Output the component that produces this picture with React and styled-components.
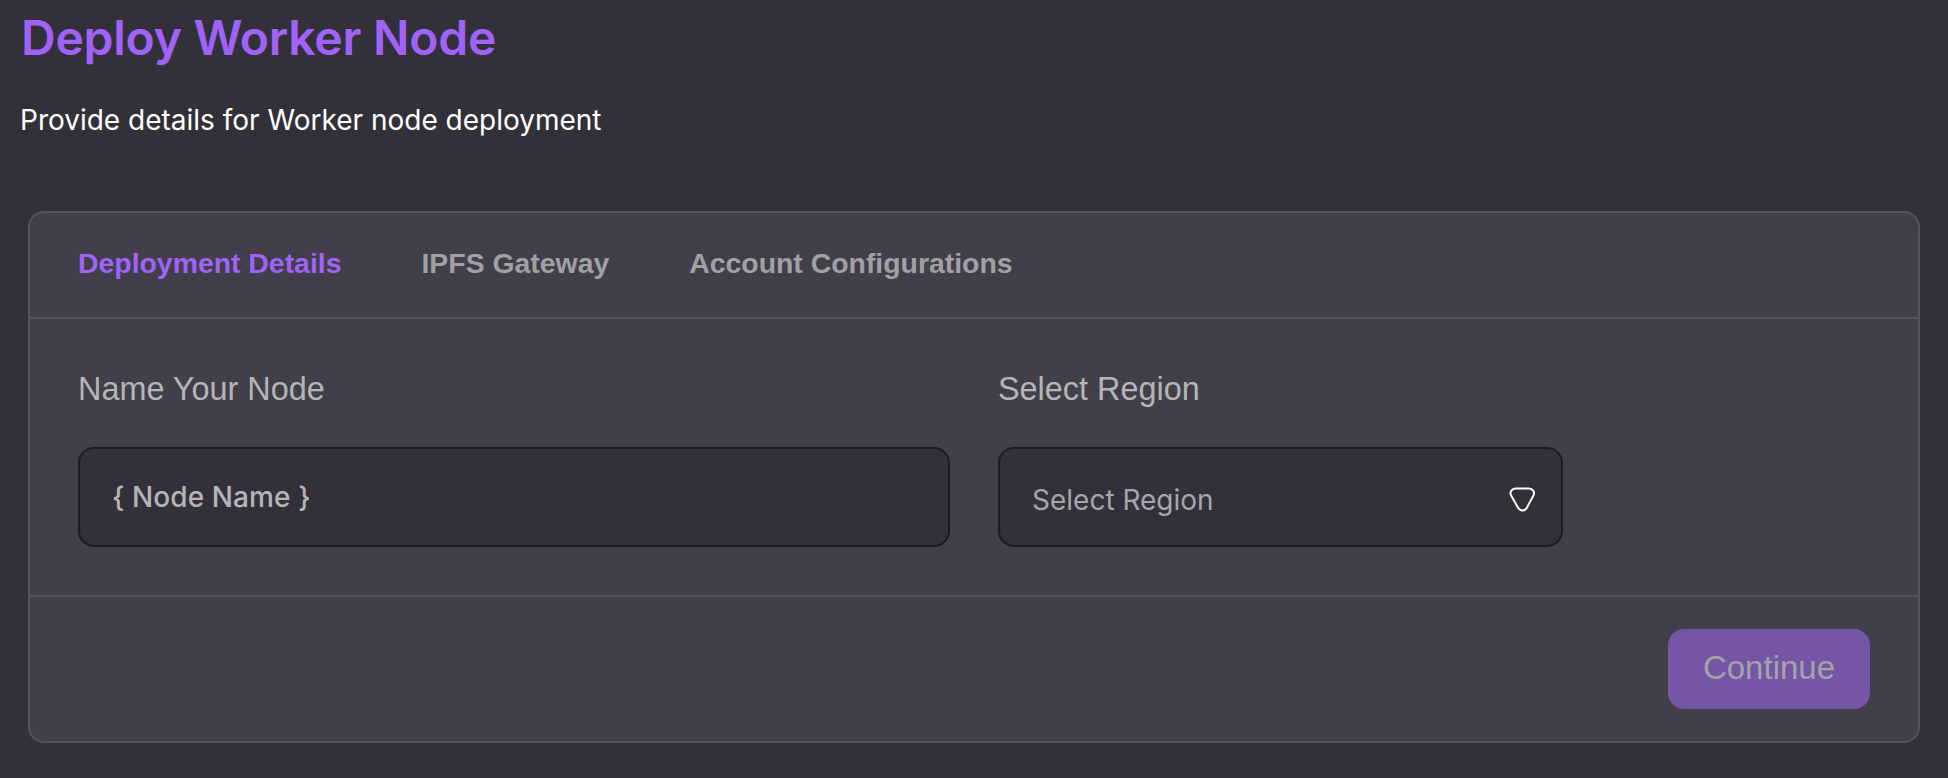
import React from "react";
import styled, { createGlobalStyle } from "styled-components";

const Global = createGlobalStyle`
  html, body { margin: 0; padding: 0; background: #32313a; }
  * { box-sizing: border-box; }
`;

const Page = styled.main`
  width: 1948px;
  height: 778px;
  overflow: hidden;
  background: #32313a;
`;

const Header = styled.header`
  padding: 9px 0 0 21px;
  height: 211px;
`;

const Title = styled.h1`
  margin: 0;
  font: 600 48px/58px Inter, sans-serif;
  letter-spacing: -0.25px;
  color: #a162f7;
`;

const Subtitle = styled.p`
  margin: 36px 0 0 -1px;
  font: 400 28px/34px Inter, sans-serif;
  color: #ffffff;
`;

const Card = styled.section`
  margin-left: 28px;
  width: 1892px;
  height: 532px;
  display: flex;
  flex-direction: column;
  background: #403f4a;
  border: 2px solid #555558;
  border-radius: 16px;
`;

const Tabs = styled.nav`
  height: 106px;
  flex: none;
  display: flex;
  align-items: center;
  gap: 80px;
  padding: 0 48px 5px;
  border-bottom: 2px solid #555558;
`;

const Tab = styled.span`
  font: 700 28.4px/34px "Liberation Sans", sans-serif;
  color: ${(p) => (p.$active ? "#a162f7" : "#a0a0a5")};
`;

const Form = styled.div`
  flex: 1;
  display: flex;
  gap: 48px;
  padding: 52px 48px 0;
  border-bottom: 2px solid #555558;
`;

const Field = styled.div`
  width: ${(p) => p.$width}px;
  display: flex;
  flex-direction: column;
  gap: 40px;
`;

const Label = styled.label`
  font: 400 32.4px/36px "Liberation Sans", sans-serif;
  color: #b5b5b8;
`;

const NameInput = styled.input`
  height: 100px;
  width: 100%;
  padding: 0 32px;
  background: #32313a;
  border: 2px solid #1b1b20;
  border-radius: 16px;
  outline: none;
  font: 500 28px/34px Inter, sans-serif;
  letter-spacing: 0.1px;
  color: #b5b5b8;
  &::placeholder { color: #b5b5b8; opacity: 1; }
`;

const SelectBox = styled.div`
  height: 100px;
  width: 100%;
  display: flex;
  align-items: center;
  justify-content: space-between;
  padding: 5px 25px 0 32px;
  background: #32313a;
  border: 2px solid #1b1b20;
  border-radius: 16px;
`;

const SelectText = styled.span`
  font: 400 28px/32px Inter, sans-serif;
  color: #a5a5ac;
`;

const Footer = styled.footer`
  height: 144px;
  flex: none;
  display: flex;
  justify-content: flex-end;
  align-items: flex-start;
  padding: 32px 48px 0;
`;

const ContinueButton = styled.button`
  width: 202px;
  height: 80px;
  padding: 0 0 3px;
  border: 0;
  border-radius: 16px;
  background: #7455a6;
  color: #a3a3a8;
  font: 400 33px/36px "Liberation Sans", sans-serif;
`;

const Chevron = () => (
  <svg width="27" height="26" viewBox="0 0 27 26" fill="none">
    <path
      d="M6.6 1.5h13.3c3.9 0 6.2 3.7 4.5 7l-6.6 12.4c-1.8 3.4-6.8 3.4-8.6 0L2.1 8.5c-1.7-3.3.6-7 4.5-7Z"
      stroke="#fff"
      strokeWidth="2"
    />
  </svg>
);

export default function App() {
  return (
    <Page>
      <Global />
      <Header>
        <Title>Deploy Worker Node</Title>
        <Subtitle>Provide details for Worker node deployment</Subtitle>
      </Header>
      <Card>
        <Tabs>
          <Tab $active>Deployment Details</Tab>
          <Tab>IPFS Gateway</Tab>
          <Tab>Account Configurations</Tab>
        </Tabs>
        <Form>
          <Field $width={872}>
            <Label htmlFor="node-name">Name Your Node</Label>
            <NameInput id="node-name" placeholder="{ Node Name }" />
          </Field>
          <Field $width={565}>
            <Label>Select Region</Label>
            <SelectBox>
              <SelectText>Select Region</SelectText>
              <Chevron />
            </SelectBox>
          </Field>
        </Form>
        <Footer>
          <ContinueButton>Continue</ContinueButton>
        </Footer>
      </Card>
    </Page>
  );
}
